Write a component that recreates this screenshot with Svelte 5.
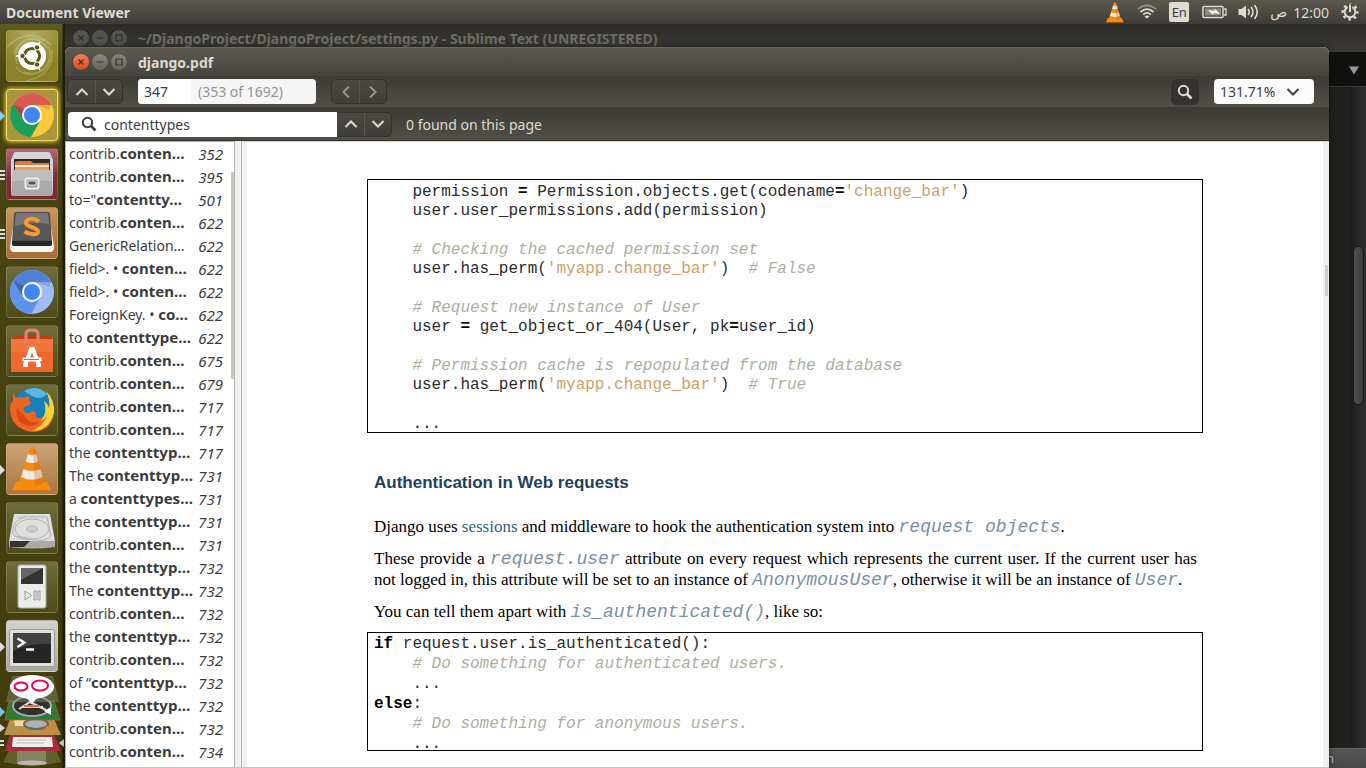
<script>
  const results = [
    ['contrib.', 'conten…', 352],
    ['contrib.', 'conten…', 395],
    ['to="', 'contentty…', 501],
    ['contrib.', 'conten…', 622],
    ['GenericRelation…', '', 622],
    ['field>. • ', 'conten…', 622],
    ['field>. • ', 'conten…', 622],
    ['ForeignKey. • ', 'co…', 622],
    ['to ', 'contenttype…', 622],
    ['contrib.', 'conten…', 675],
    ['contrib.', 'conten…', 679],
    ['contrib.', 'conten…', 717],
    ['contrib.', 'conten…', 717],
    ['the ', 'contenttyp…', 717],
    ['The ', 'contenttyp…', 731],
    ['a ', 'contenttypes…', 731],
    ['the ', 'contenttyp…', 731],
    ['contrib.', 'conten…', 731],
    ['the ', 'contenttyp…', 732],
    ['The ', 'contenttyp…', 732],
    ['contrib.', 'conten…', 732],
    ['the ', 'contenttyp…', 732],
    ['contrib.', 'conten…', 732],
    ['of “', 'contenttyp…', 732],
    ['the ', 'contenttyp…', 732],
    ['contrib.', 'conten…', 732],
    ['contrib.', 'conten…', 734]
  ];

  const apps = [
    { id: 'dash', label: 'Search your computer', mark: '' },
    { id: 'chrome', label: 'Google Chrome', mark: 'blue' },
    { id: 'files', label: 'Files', mark: 'bars' },
    { id: 'sublime', label: 'Sublime Text', mark: 'bars' },
    { id: 'chromium', label: 'Chromium', mark: '' },
    { id: 'software', label: 'Ubuntu Software', mark: '' },
    { id: 'firefox', label: 'Firefox', mark: '' },
    { id: 'vlc', label: 'VLC media player', mark: 'grey' },
    { id: 'disk', label: 'Disk', mark: '' },
    { id: 'player', label: 'Media device', mark: '' },
    { id: 'terminal', label: 'Terminal', mark: 'grey' }
  ];

  let page = $state('347');
  let query = $state('contenttypes');
  let zoom = $state('131.71%');
</script>

{#snippet up()}
  <svg width="14" height="10" viewBox="0 0 14 10"><path d="M1.500 8 7 2.500 12.500 8" fill="none" stroke="currentColor" stroke-width="2" /></svg>
{/snippet}
{#snippet down()}
  <svg width="14" height="10" viewBox="0 0 14 10"><path d="M1.500 2 7 7.500 12.500 2" fill="none" stroke="currentColor" stroke-width="2" /></svg>
{/snippet}
{#snippet lens()}
  <svg width="16" height="16" viewBox="0 0 16 16"><circle cx="6.500" cy="6.500" r="4.700" fill="none" stroke="currentColor" stroke-width="2" /><path d="M10 10 14.500 14.500" stroke="currentColor" stroke-width="2.600" /></svg>
{/snippet}
{#snippet cone()}
  <path d="M10 39 6 47.500H45L41 39Z" fill="#f78d10" />
  <path d="M6 47.500H45V49H6Z" fill="#d96a05" />
  <path d="M23.500 6Q26 1.500 28.500 6L38 38Q38 43 26 43T13 38Z" fill="#f58a12" />
  <path d="M22 11Q26 13 30 11L32.300 18.500Q26 21.500 19.700 18.500Z" fill="#eceae8" />
  <path d="M17.600 26Q26 30 34.400 26L36.800 34Q26 39.500 15.200 34Z" fill="#eceae8" />
  <path d="M27 3.500 30 6 38 38Q38 42 29 43Z" fill="#c94e00" opacity=".25" />
{/snippet}
{#snippet windowButtons()}
  <div class="wbtns">
    <button class="wb close" aria-label="Close"><svg viewBox="0 0 16 16"><path d="m5.500 5.500 5 5m0-5-5 5" /></svg></button>
    <button class="wb" aria-label="Minimise"><svg viewBox="0 0 16 16"><path d="M4.500 8h7" /></svg></button>
    <button class="wb" aria-label="Maximise"><svg viewBox="0 0 16 16"><path d="M5 5h6v6H5z" /></svg></button>
  </div>
{/snippet}
{#snippet icon(id)}
  <svg viewBox="0 0 52 52" aria-hidden="true">
    {#if id === 'dash'}
      <g fill="none" stroke="#fff" opacity=".22" stroke-width="1.500">
        <path d="M11 34C5 16 22 2 39 11M18 42C36 49 49 30 42 16M8 24C12 8 31 3 41 18M44 30C38 47 18 48 10 37" />
        <path d="M1 17C15 2 33 2 45 15M20 51C38 48 48 36 46 20" />
      </g>
      <circle cx="26" cy="26" r="14" fill="#fff" />
      <circle cx="26" cy="26" r="7.600" fill="none" stroke="#5f570f" stroke-width="3" />
      <path d="M26 26H10M26 26 34 12M26 26 34 40" stroke="#fff" stroke-width="1.500" />
      <circle cx="26" cy="26" r="5.500" fill="#fff" />
      <g fill="#5f570f" stroke="#fff" stroke-width="1"><circle cx="16.500" cy="26" r="2.700" /><circle cx="31" cy="17.500" r="2.700" /><circle cx="31" cy="34.500" r="2.700" /></g>
    {:else if id === 'chrome' || id === 'chromium'}
      {@const c = id === 'chrome' ? ['#fdc93b', '#d95a50', '#19a05d', '#4285f4'] : ['#9ebdf8', '#4f7fd6', '#5c93f0', '#4285f4']}
      <circle cx="26" cy="26" r="22" fill={c[0]} />
      <path d="M7 15A22 22 0 0 1 45.600 16H26L17.300 31Z" fill={c[1]} />
      <path d="M7 15A22 22 0 0 0 25 48L34.700 31H17.300Z" fill={c[2]} />
      <path d="M45.600 16H30L43 21Z" opacity=".12" />
      <path d="M7 15 17.300 31 18 20Z" opacity=".2" />
      <circle cx="26" cy="26" r="10" fill="#fff" />
      <circle cx="26" cy="26" r="8" fill={c[3]} />
    {:else if id === 'files'}
      <path d="M8 5Q8 4 10 4H42Q44 4 44.500 6L47 12V45H5V12Z" fill="#d4d4d4" />
      <path d="M8 11H44V25H8Z" fill="#292929" />
      <path d="M9 15Q9 13 12 13H25L27 15H43V26H9Z" fill="#e87435" /><path d="M9 17H43V19H9Z" fill="#fff0d8" /><path d="M9 19H43V22H9Z" fill="#f49a55" />
      <path d="M7 22H45L47 46Q46 48 44 48H8Q5 48 5 46Z" fill="#aaa" />
      <path d="M7 22H45L46 33H6Z" fill="#bdbdbd" />
      <rect x="19.500" y="30.500" width="13" height="10" rx="2" fill="#999" stroke="#eee" stroke-width="2" />
      <rect x="22" y="33" width="8" height="4" fill="#555" stroke="#fff" stroke-width=".8" />
    {:else if id === 'sublime'}
      <path d="M9 6H43L48 40Q48 45 44 45H8Q4 45 4 40Z" fill="#f5f5f5" />
      <path d="M8 7Q8 5 10 5H42Q44 5 44 7L46 36Q46 39 43 39H9Q6 39 6 36Z" fill="#4d4d4d" />
      <path d="M10 6H42Q43 6 43 8L45 33H7L9 8Q9 6 10 6Z" fill="#585858" />
      <path d="M10 6H42L43 17Q25 14 9 19Z" fill="#777" />
      <path d="M6 34H46V37Q46 39 43 39H9Q6 39 6 37Z" fill="#272727" />
      <path d="M33 14.500C27 10 20 11.500 20 16S32 20 32 24.500 23 27.500 18.500 24.500" fill="none" stroke="#ff9a2c" stroke-width="4" />
    {:else if id === 'software'}
      <path d="M5 12H47V47H5Z" fill="#f0672d" />
      <path d="M5 14 8 10H44L47 14Z" fill="#b8411a" />
      <path d="M5 14H47V27H5Z" fill="#f47d48" opacity=".65" />
      <path d="M20 18V9Q20 5 26 5T32 9V18" fill="none" stroke="#e98168" stroke-width="3" />
      <path d="M19 41 25 24H27L33 41M16.500 34.500H35.500M17 40H22M30 40H35" fill="none" stroke="#fff" stroke-width="4" />
      <path d="M18 34.500H33" stroke="#eb632b" stroke-width="1" />
    {:else if id === 'firefox'}
      <circle cx="27" cy="25" r="21" fill="#167fbd" />
      <path d="M18 7Q31 0 41 10Q34 17 26 12Z" fill="#6cc5e7" opacity=".8" />
      <path d="M7 9C8 11 9 13 11 14Q13 12 17 14Q22 11 24 13Q21 16 25 18L24 21Q16 22 18 27Q21 31 26 27Q30 27 30 30Q28 34 34 34Q45 32 43 17Q47 21 48 25Q48 47 26 48Q5 45 4 25Q4 19 7 17Z" fill="#ed6521" />
      <path d="M40 7Q49 16 48 29Q43 46 27 47Q39 40 41 31Q38 36 35 37Q42 28 38 17Q43 21 43 25Q45 18 40 7Z" fill="#ffd332" />
      <path d="M18 31Q22 40 33 38Q25 46 14 38Q9 31 11 23Q13 28 18 31Z" fill="#cf3d13" opacity=".7" />
    {:else if id === 'vlc'}
      {@render cone()}
    {:else if id === 'disk'}
      <path d="M8 12H44L49 39H3Z" fill="#dedede" />
      <path d="M3 39H49V45Q26 48 3 45Z" fill="#aaa" />
      <path d="M4 39H24L18 45H4Z" fill="#333" />
      <g fill="none" stroke="#b4b4b4"><path d="M11 15H41L45 34Q38 40 30 38Q4 37 7 29Q6 19 19 15" /><ellipse cx="26" cy="27" rx="17" ry="10" /><ellipse cx="26" cy="27" rx="5.500" ry="3" fill="#ccc" /><path d="M9 34 22 36" /></g>
    {:else if id === 'player'}
      <rect x="12" y="4" width="28" height="43" rx="2" fill="#ebebeb" stroke="#aaa" />
      <rect x="15" y="7" width="22" height="16" fill="#333" /><path d="M15 7H37L15 19Z" fill="#666" />
      <path d="m19 30 6.500 4.500L19 39ZM28 30h2v9h-2ZM32 30h2v9h-2Z" fill="none" stroke="#9d9d9d" />
    {:else if id === 'terminal'}
      <rect x="3.500" y="9.500" width="45" height="37" rx="2" fill="#dedede" stroke="#999" />
      <rect x="7" y="13" width="38" height="30" fill="#252525" /><path d="M7 13H45V24Q25 22 7 31Z" fill="#424242" />
      <path d="m11.500 18.500 7 4-7 4.500M20 29.500h8" fill="none" stroke="#fff" stroke-width="2.300" />
    {/if}
  </svg>
{/snippet}

<div class="screen">
  <header class="panel">
    <span class="app-name">Document Viewer</span>
    <div class="tray">
      <svg class="i-cone" width="20" height="22" viewBox="4 1 44 49">{@render cone()}</svg>
      <svg class="i-wifi" width="20" height="16" viewBox="0 0 20 16" fill="none" stroke="#dfdbd2" stroke-width="1.700">
        <path d="M.8 5.200Q10-2.600 19.200 5.200" opacity=".45" /><path d="M3.500 8Q10 2.200 16.500 8" /><path d="M6.200 10.700Q10 7.200 13.800 10.700" /><path d="m10 14.800-2.500-2.500Q10 10.500 12.500 12.300Z" fill="#dfdbd2" stroke="none" />
      </svg>
      <span class="lang">En</span>
      <svg class="i-bat" width="25" height="14" viewBox="0 0 25 14"><rect x="1" y="1.500" width="20" height="11" rx="1" fill="none" stroke="#dfdbd2" stroke-width="1.500" /><rect x="3" y="3.500" width="16" height="7" fill="#aaa69e" opacity=".7" /><path d="M22 4h2v6h-2" fill="none" stroke="#dfdbd2" stroke-width="1.300" /><path d="m6 5 6 1 1-2 5 5-6-1-1 2Z" fill="#fff" /></svg>
      <svg class="i-vol" width="21" height="16" viewBox="0 0 21 16"><path d="M.5 5H3.500L8 1.500V14.500L3.500 11H.5Z" fill="#dfdbd2" /><path d="M10 5Q12.500 8 10 11M13 3Q17 8 13 13M16.500 1Q22 8 16.500 15" fill="none" stroke="#dfdbd2" stroke-width="1.600" /></svg>
      <span class="ampm">ص</span><span class="clock">12:00</span>
      <svg class="i-gear" width="18" height="18" viewBox="0 0 18 18" fill="none" stroke="#dfdbd2"><circle cx="9" cy="9" r="7.300" stroke-width="2.500" stroke-dasharray="2.600 3.133" stroke-dashoffset="1" /><circle cx="9" cy="9" r="5.300" stroke-width="1.900" /><path d="M9 1V9" stroke="#4b4943" stroke-width="4.500" /><path d="M9 1.500V9" stroke-width="2" /></svg>
    </div>
  </header>

  <div class="desktop">
    <nav class="launcher" aria-label="Launcher">
      {#each apps as app}
        <button class="tile {app.id}" aria-label={app.label}>
          {@render icon(app.id)}
          {#if app.mark}<span class="mark {app.mark}"></span>{/if}
        </button>
      {/each}
      <svg class="stack" viewBox="0 0 65 98" aria-hidden="true">
        <path d="M12 73H54L61 90Q32 97 3 90Z" fill="#77713f" opacity=".65" />
        <path d="M17 79H46V90H17Z" fill="#a5a187" opacity=".55" /><ellipse cx="32" cy="91" rx="15" ry="2.500" fill="#ccc" opacity=".8" />
        <path d="M10 62H54L61 79H5Z" fill="#a92d39" /><path d="M13 65H52L53 75H12Z" fill="#eee" /><path d="M17 68H46M16 71H44" stroke="#bbb" />
        <path d="M10 47H54L61 63H4Z" fill="#b8914b" /><path d="M14 48H34V54H15Z" fill="#eadba9" /><path d="M20 60Q32 50 46 59" fill="none" stroke="#d37635" />
        <ellipse cx="36" cy="52" rx="12" ry="5" fill="#a7b4b6" stroke="#666" stroke-width="2" /><path d="m46 55 9 5" stroke="#e0852e" stroke-width="3" />
        <path d="M9 29H54L60 48H5Z" fill="#2d7b34" stroke="#c76122" stroke-width=".7" />
        <ellipse cx="32" cy="34" rx="19" ry="10" fill="#303030" stroke="#aaa" stroke-width="2" /><path d="m19 37 11-7 16 8M22 35H43" stroke="#ddd" stroke-width="2" fill="none" /><path d="M24 34H39" stroke="#e66c2d" stroke-width="2" /><path d="m44 39 7-4v8Z" fill="#fff" />
        <path d="M12 4H53L59 30H6Z" fill="#86836d" opacity=".5" />
        <ellipse cx="32" cy="15" rx="22" ry="12" fill="#fff" /><path d="m26 25 6 7 6-7Z" fill="#fff" />
        <ellipse cx="21" cy="14.500" rx="6.500" ry="4" fill="none" stroke="#e6005c" stroke-width="2" /><ellipse cx="40" cy="13.500" rx="8" ry="5" fill="none" stroke="#e6005c" stroke-width="2" />
        <path d="m0 35 5 5-5 5Z" fill="#78c4dc" /><path d="m0 52 5 4-5 4Z" fill="#ddd" /><path d="M0 69H4M0 73H4" stroke="#ddd" stroke-width="2" /><path d="m64 67-5 4 5 4Z" fill="#ddd" />
      </svg>
    </nav>

    <main class="space">
      <section class="editor">
        <div class="titlebar">{@render windowButtons()}<span>~/DjangoProject/DjangoProject/settings.py - Sublime Text (UNREGISTERED)</span></div>
        <div class="tabs"><svg width="10" height="9" viewBox="0 0 10 9"><path d="M0 .500H10L5 8.500Z" fill="#999" /></svg></div>
        <div class="code-area"><div class="rail"><div class="thumb"></div></div></div>
        <div class="status"><span>n</span></div>
      </section>

      <section class="viewer">
        <div class="titlebar">{@render windowButtons()}<span>django.pdf</span></div>
        <div class="toolbar">
          <div class="pair"><button aria-label="Previous page">{@render up()}</button><button aria-label="Next page">{@render down()}</button></div>
          <label class="page-box"><input aria-label="Page" bind:value={page} /><span>(353 of 1692)</span></label>
          <div class="pair history">
            <button aria-label="Back"><svg width="10" height="14" viewBox="0 0 10 14"><path d="M8 1.500 2.500 7 8 12.500" fill="none" stroke="currentColor" stroke-width="2" /></svg></button>
            <button aria-label="Forward"><svg width="10" height="14" viewBox="0 0 10 14"><path d="M2 1.500 7.500 7 2 12.500" fill="none" stroke="currentColor" stroke-width="2" /></svg></button>
          </div>
          <button class="find" aria-label="Find">{@render lens()}</button>
          <label class="zoom">
            <select aria-label="Zoom" bind:value={zoom}><option>131.71%</option></select>
            {@render down()}
          </label>
        </div>
        <div class="searchbar">
          <label class="query">{@render lens()}<input aria-label="Search text" bind:value={query} /></label>
          <div class="pair attached"><button aria-label="Previous result">{@render up()}</button><button aria-label="Next result">{@render down()}</button></div>
          <span class="found">0 found on this page</span>
        </div>
        <div class="content">
          <aside>
            <ul>
              {#each results as [pre, hit, num]}
                <li><span>{pre}<b>{hit}</b></span><i>{num}</i></li>
              {/each}
            </ul>
            <div class="side-thumb"></div>
          </aside>
          <div class="document">
            <article>
              <div class="code first">
<pre>    permission <b>=</b> Permission.objects.get(codename<b>=</b><s>'change_bar'</s>)
    user.user_permissions.add(permission)</pre>
<pre>    <em># Checking the cached permission set</em>
    user.has_perm(<s>'myapp.change_bar'</s>)  <em># False</em></pre>
<pre>    <em># Request new instance of User</em>
    user <b>=</b> get_object_or_404(User, pk<b>=</b>user_id)</pre>
<pre>    <em># Permission cache is repopulated from the database</em>
    user.has_perm(<s>'myapp.change_bar'</s>)  <em># True</em></pre>
<pre>    ...</pre>
              </div>
              <h2>Authentication in Web requests</h2>
              <p>Django uses <a href="#sessions">sessions</a> and middleware to hook the authentication system into <a class="ref" href="#request">request objects</a>.</p>
              <p>These provide a <a class="ref" href="#user">request.user</a> attribute on every request which represents the current user. If the current user has not logged in, this attribute will be set to an instance of <a class="ref" href="#anonymous">AnonymousUser</a>, otherwise it will be an instance of <a class="ref" href="#model">User</a>.</p>
              <p>You can tell them apart with <a class="ref" href="#auth">is_authenticated()</a>, like so:</p>
              <div class="code second">
<pre><b>if</b> request.user.is_authenticated():
    <em># Do something for authenticated users.</em>
    ...
<b>else</b>:
    <em># Do something for anonymous users.</em>
    ...</pre>
              </div>
            </article>
            <div class="doc-rail"><div class="doc-thumb"></div></div>
          </div>
        </div>
      </section>
    </main>
  </div>
</div>

<style>
  :global(body) { background: #222; overflow: hidden; }
  .screen { height: 100vh; display: flex; flex-direction: column; overflow: hidden; font-family: "Noto Sans", "DejaVu Sans", sans-serif; font-size: 14px; color: #dfdbd2; }
  button, input, select { font: inherit; color: inherit; margin: 0; padding: 0; border: 0; background: none; box-sizing: border-box; }
  svg { display: block; flex: none; }

  .panel { height: 24px; flex: none; display: flex; align-items: center; justify-content: space-between; padding: 0 7px 0 6px; background: linear-gradient(#5b584e, #3d3c38); z-index: 2; }
  .app-name { font-weight: 700; }
  .tray { display: flex; align-items: center; }
  .i-cone { margin-right: 12px; }
  .i-wifi { margin-right: 12px; }
  .lang { width: 20px; height: 20px; border-radius: 2px; background: #dfdbd2; color: #3c3b37; text-align: center; line-height: 20px; font-size: 13px; margin-right: 13px; }
  .i-bat { margin-right: 11px; }
  .i-vol { margin-right: 11px; }
  .ampm { font-family: "DejaVu Sans", sans-serif; margin-right: 6px; }
  .clock { margin-right: 12px; }

  .desktop { flex: 1; min-height: 0; display: flex; }
  .launcher { width: 65px; flex: none; box-sizing: border-box; display: flex; flex-direction: column; align-items: center; gap: 7px; padding-top: 6px; background: linear-gradient(90deg, #0000 62px, #25230a 63px), linear-gradient(#5f5a1d, #4a4612 60px, #403c0c); overflow: hidden; }
  .tile { position: relative; width: 52px; height: 52px; flex: none; border-radius: 4px; border: 1px solid #ffffff26; background: linear-gradient(#6f6d3c, #4e4b18); margin-right: 1px; }
  .tile > svg { width: 52px; height: 52px; margin: -1px; }
  .dash { background: radial-gradient(circle at 50% 0, #b5ad64, #8a8224 70%); }
  .chrome { background: #a8963c; border-color: #f6dc62; box-shadow: 0 0 4px 1px #e4c83b; }
  .files { background: linear-gradient(#ad6a6f, #7b2a38 60%); }
  .sublime { background: linear-gradient(#c69863, #a56e34); }
  .vlc { background: linear-gradient(#cda477, #aa753f); }
  .terminal { background: linear-gradient(#d2d1cb, #a9a7a0); }
  .mark { position: absolute; left: -7px; top: 21px; width: 5px; height: 10px; background: #ddd; clip-path: polygon(0 0, 100% 50%, 0 100%); }
  .mark.blue { background: #83cfe9; }
  .mark.bars { clip-path: none; background: repeating-linear-gradient(#ddd 0 2px, #0000 2px 4px); }
  .stack { width: 65px; height: 98px; margin-top: -7px; }

  .space { position: relative; flex: 1; min-width: 0; }
  .editor { height: 100%; display: flex; flex-direction: column; background: #20211c; }
  .titlebar { display: flex; align-items: center; gap: 11px; height: 29px; flex: none; box-sizing: border-box; padding-left: 8px; font-weight: 700; }
  .editor .titlebar { background: linear-gradient(#2b2a27, #3c3b38); color: #6f6d66; height: 28px; }
  .wbtns { display: flex; gap: 3px; }
  .wb { width: 16px; height: 16px; border-radius: 50%; background: linear-gradient(#8a867b, #68655d); box-shadow: 0 0 1px #222; }
  .wb svg { width: 16px; height: 16px; fill: none; stroke: #33322e; stroke-width: 1.2px; }
  .viewer .close { background: linear-gradient(#f5815c, #e04a1b); }
  .editor .wb { background: #55534d; }
  .editor .wb svg { stroke: #302f2b; }
  .tabs { height: 35px; flex: none; display: flex; justify-content: flex-end; align-items: center; padding: 2px 7px 0 0; background: #11120f; border-bottom: 1px solid #3a3a38; box-sizing: border-box; }
  .code-area { flex: 1; min-height: 0; display: flex; justify-content: flex-end; }
  .rail { width: 16px; box-sizing: border-box; padding: 160px 3px 0 4px; background: linear-gradient(90deg, #1c1c1c, #303030); }
  .thumb { height: 157px; border-radius: 5px; background: linear-gradient(90deg, #505050, #3c3c3c); box-shadow: 0 0 0 1px #191919; }
  .status { height: 20px; flex: none; display: flex; justify-content: flex-end; padding-right: 32px; background: linear-gradient(#555, #484848); border-top: 1px solid #686868; box-sizing: border-box; font-size: 13px; color: #bbb; }

  .viewer { position: absolute; inset: 23px 37px 0 0; display: flex; flex-direction: column; box-shadow: 0 0 6px #0008; border-radius: 6px 6px 0 0; overflow: hidden; background: #f1f0ee; }
  .viewer .titlebar { background: linear-gradient(#5c594f, #45443f); border-top: 1px solid #6c695e; }
  .toolbar, .searchbar { display: flex; align-items: center; flex: none; box-sizing: border-box; background: linear-gradient(#3c3b37, #524f47); }
  .toolbar { height: 32px; padding: 0 15px 0 2px; border-bottom: 1px solid #3b3a35; }
  .searchbar { height: 33px; padding: 0 3px; border-bottom: 1px solid #34332f; }
  .pair { display: flex; height: 25px; border: 1px solid #33322e; border-radius: 5px; box-sizing: border-box; background: linear-gradient(#4a4842, #3f3e39); overflow: hidden; }
  .pair button { width: 27px; display: flex; align-items: center; justify-content: center; }
  .pair button + button { border-left: 1px solid #5b5850; }
  .page-box { display: flex; align-items: center; width: 178px; height: 25px; margin: 0 15px; border-radius: 4px; background: #f5f5f5; color: #949494; overflow: hidden; }
  .page-box input { width: 53px; height: 25px; padding-left: 6px; background: #fff; color: #3c3c3c; margin-right: 7px; }
  .history { color: #97948c; }
  .find { width: 28px; height: 26px; margin-left: auto; margin-right: 15px; border-radius: 5px; background: #34332f; display: flex; align-items: center; justify-content: center; }
  .zoom { display: flex; align-items: center; position: relative; width: 100px; height: 25px; border-radius: 4px; background: #fcfcfc; color: #3c3c3c; }
  .zoom select { appearance: none; width: 100%; height: 25px; padding-left: 6px; }
  .zoom svg { position: absolute; right: 14px; pointer-events: none; }
  .query { display: flex; align-items: center; gap: 7px; width: 269px; height: 25px; box-sizing: border-box; padding-left: 13px; border-radius: 4px 0 0 4px; background: #fff; color: #3c3c3c; }
  .query input { flex: 1; min-width: 0; height: 25px; }
  .attached { border-radius: 0 5px 5px 0; margin-right: 14px; border-left: 0; }

  .content { flex: 1; min-height: 0; display: flex; gap: 6px; border-bottom: 1px solid #c8c6c2; }
  aside { position: relative; width: 170px; flex: none; box-sizing: border-box; background: #fff; border: 1px solid #b6b3ad; border-width: 1px 1px 0; overflow: hidden; color: #3c3c3c; }
  ul { list-style: none; margin: 0; padding: 0 11px 0 3px; }
  li { height: 23px; line-height: 23px; display: flex; align-items: center; justify-content: space-between; white-space: pre; }
  li b, li i { font-size: 15px; line-height: 20px; }
  .side-thumb { position: absolute; right: 0; top: 30px; width: 3px; height: 207px; background: #c9c8c5; }
  .document { flex: 1; min-width: 0; display: flex; padding-left: 5px; border-left: 1px solid #b6b3ad; border-top: 1px solid #d8d6d2; overflow: hidden; }
  article { flex: 1; min-width: 0; background: #fff; color: #000; font-family: "Liberation Serif", serif; font-size: 17px; line-height: 21px; padding: 37px 120px 0; }
  .code { border: 1px solid #000; box-sizing: border-box; padding: 3px 6px; font-size: 16px; line-height: 19px; color: #2b2b2b; display: flex; flex-direction: column; gap: 20px; }
  .first { height: 254px; }
  .second { height: 119px; margin-top: 10px; padding: 1px 6px; line-height: 20px; }
  pre { margin: 0; font-family: "Liberation Mono", monospace; }
  .code em { color: #acae9d; }
  .code s { color: #cca069; text-decoration: none; }
  .code b { color: #000; }
  h2 { margin: 39px 7px 0; font: bold 17px/22px "Liberation Sans", sans-serif; color: #20435c; }
  p { margin: 11px 6px 0 7px; text-align: justify; }
  h2 + p { margin-top: 22px; }
  p a { color: #355f7c; text-decoration: none; }
  .ref { font-family: "Liberation Mono", monospace; font-size: 18px; font-style: italic; color: #7890a4; line-height: 20px; }
  .doc-rail { width: 6px; flex: none; box-sizing: border-box; padding: 123px 1px 0 2px; background: #f0efed; }
  .doc-thumb { height: 31px; background: #cfcecb; }
</style>
